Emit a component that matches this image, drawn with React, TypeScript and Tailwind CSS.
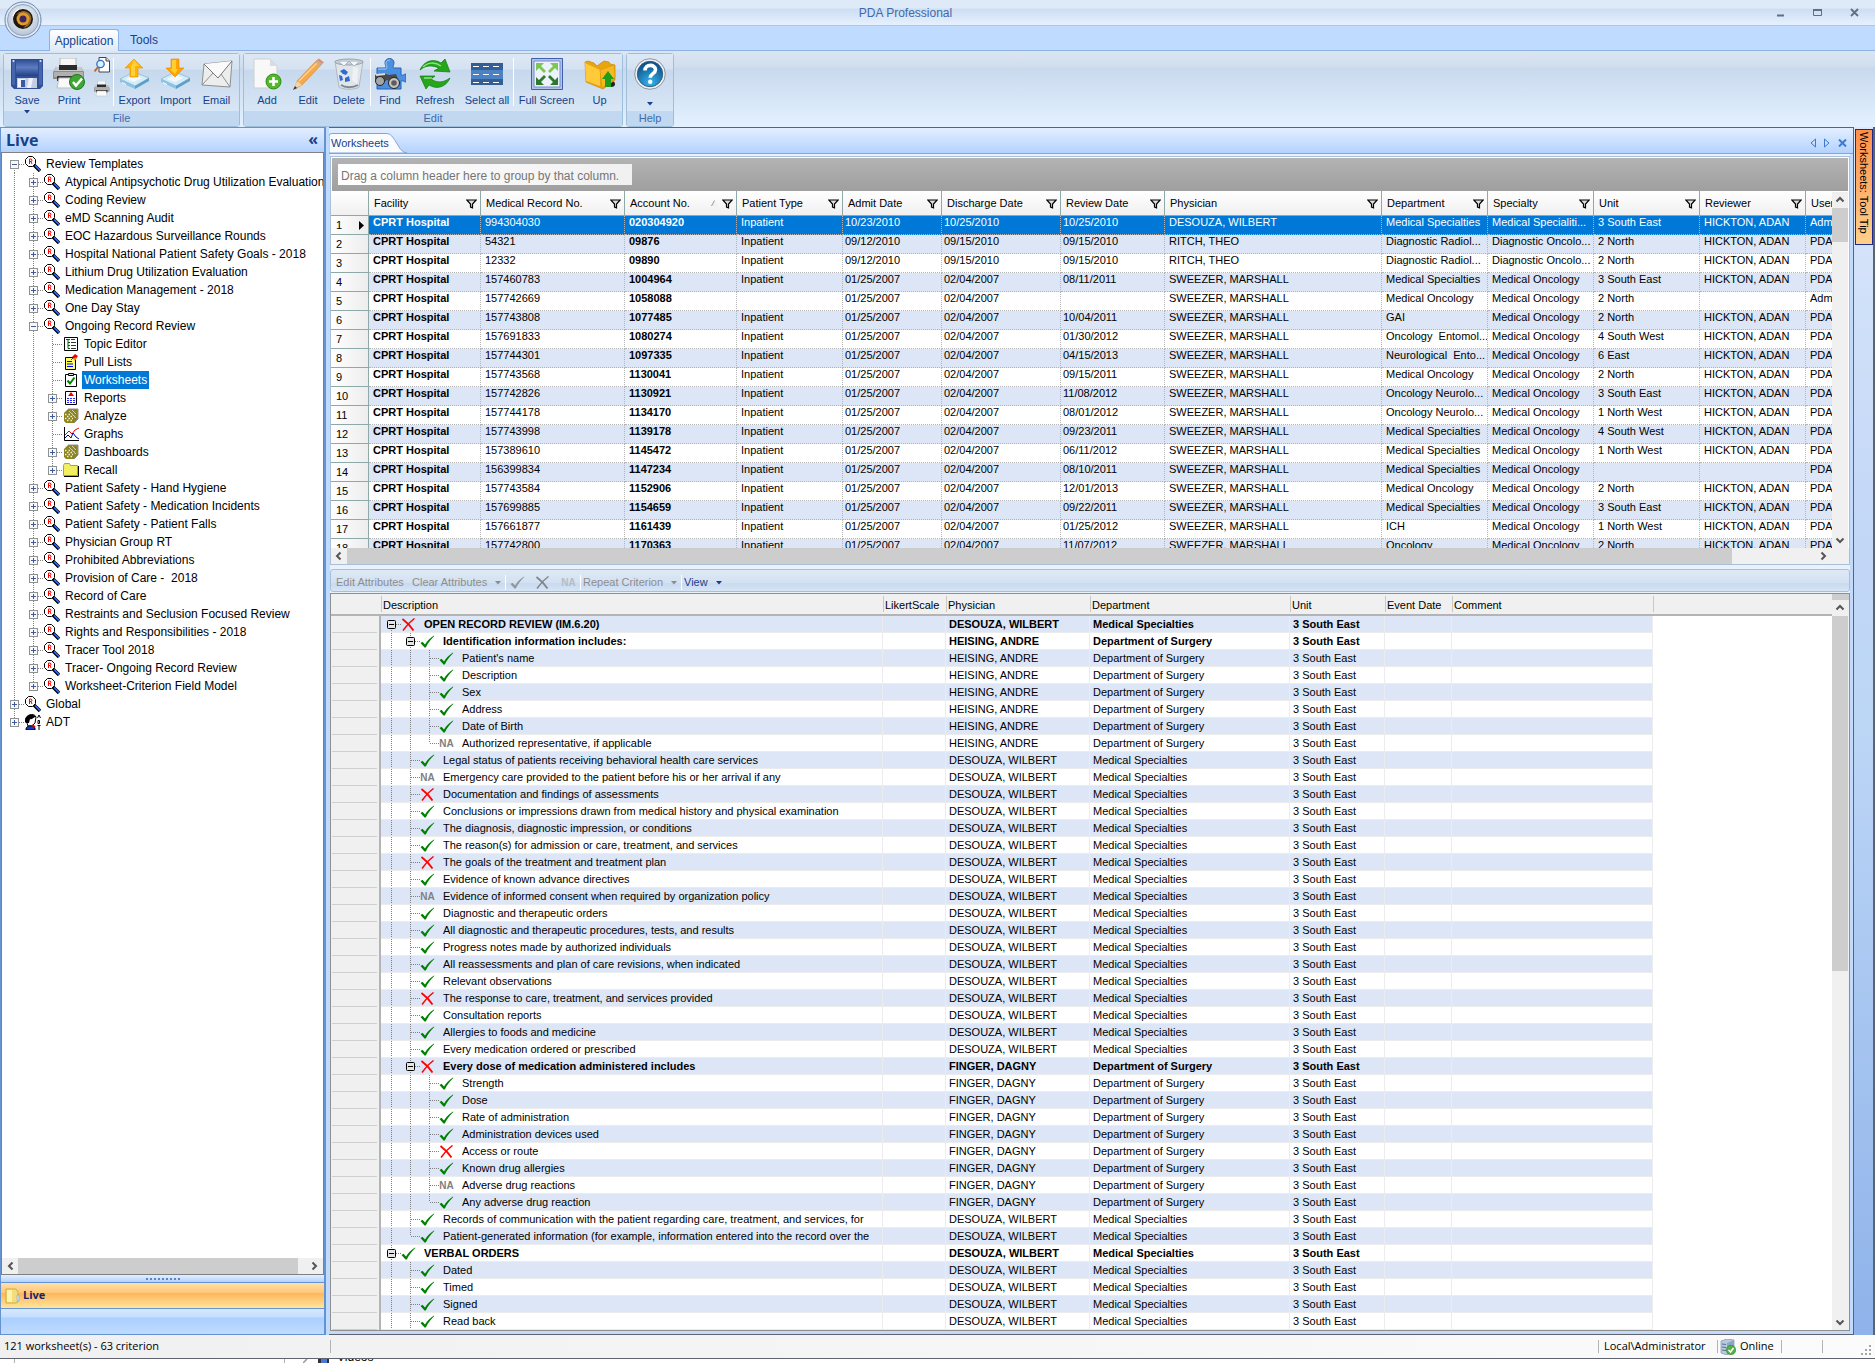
import React from "react";

type P = { children?: React.ReactNode };

/* ---------- ribbon icons ---------- */

const Svg32 = ({ children }: P) => (
  <svg width="32" height="32" viewBox="0 0 32 32" aria-hidden="true">
    {children}
  </svg>
);

const SaveIcon = () => (
  <Svg32>
    <defs>
      <linearGradient id="sv" x1="0" y1="0" x2="0" y2="1">
        <stop offset="0" stopColor="#2c4a8c" />
        <stop offset=".5" stopColor="#5b7cc4" />
        <stop offset="1" stopColor="#24407f" />
      </linearGradient>
    </defs>
    <path d="M0 1h32v27l-3 3H3l-3-3z" fill="#2f4f97" />
    <path d="M5 1h22v17H5z" fill="url(#sv)" />
    <path d="M1 2h3v25H1zM28 2h3v25h-3z" fill="#4565ad" />
    <path d="M6 20h20v10H6z" fill="#c3cde2" />
    <path d="M7 21h7v8H7z" fill="#f1f4fa" />
    <path d="M10 22h4v7h-4z" fill="#3a5a9f" />
    <path d="M18 20h4l-2 10h-4z" fill="#eef2fa" />
    <circle cx="2.500" cy="3" r="1" fill="#dfe6f5" />
    <circle cx="29.500" cy="3" r="1" fill="#dfe6f5" />
  </Svg32>
);

const PrinterBody = () => (
  <g>
    <path d="M7 0h16v12H7z" fill="#f7f7f7" stroke="#b5b5b5" />
    <path d="M3 9h25l3 5v7H0v-7z" fill="#8c8c8c" />
    <path d="M3 9h25l2 4H1z" fill="#c8c8c8" />
    <path d="M6 7h18v5H6z" fill="#2b2b2b" />
    <path d="M1 14h29v5H1z" fill="#b0b0b0" />
    <path d="M4 18h23v5H4z" fill="#3a3a3a" />
    <path d="M6 20h18l2 10H4z" fill="#fafafa" stroke="#bdbdbd" />
  </g>
);

const PrintIcon = () => (
  <Svg32>
    <PrinterBody />
    <circle cx="24" cy="24" r="7.500" fill="#3fa535" stroke="#1f7a1a" />
    <path d="M20 24l3 3.500 6-7" fill="none" stroke="#fff" strokeWidth="2.500" />
  </Svg32>
);

const SmallPrinter = () => (
  <svg width="16" height="16" viewBox="0 0 32 32" aria-hidden="true">
    <PrinterBody />
  </svg>
);

const PreviewIcon = () => (
  <svg width="16" height="16" viewBox="0 0 16 16" aria-hidden="true">
    <path d="M5 .5h7l3.500 3.500v11H5z" fill="#fff" stroke="#444" />
    <path d="M12 .5V4h3.500" fill="#ddd" stroke="#444" />
    <circle cx="6.500" cy="7" r="3.700" fill="#d9f0ff" stroke="#2f6fc4" strokeWidth="1.300" />
    <path d="M4 10l-3.500 4.500" stroke="#c06a2a" strokeWidth="2" />
  </svg>
);

const Drive = () => (
  <g>
    <path d="M1 21l14-7 15 6-14 8z" fill="#d3ecf8" stroke="#7fb4d4" strokeWidth=".7" />
    <path d="M1 21v3l15 7v-3.500z" fill="#8cc3e2" />
    <path d="M16 28v3l14-8v-3z" fill="#5b9fca" />
    <path d="M7 21l8-4 8 3-8 4z" fill="#fff" opacity=".7" />
    <path d="M3 24.500l4 2" stroke="#fff" />
  </g>
);

const ExportIcon = () => (
  <Svg32>
    <Drive />
    <path d="M15 1l9 9h-5v9h-8v-9H6z" fill="#ffb400" stroke="#f08c00" strokeWidth=".6" />
    <path d="M15 2l5 6h-4v10h-4V9z" fill="#ffd23a" />
  </Svg32>
);

const ImportIcon = () => (
  <Svg32>
    <Drive />
    <path d="M11 1h8v9h5l-9 9-9-9h5z" fill="#ffa400" stroke="#ef8300" strokeWidth=".6" />
    <path d="M12 2h4v9h2l-3 5-5-5h2z" fill="#ffcf2e" />
  </Svg32>
);

const EmailIcon = () => (
  <Svg32>
    <path d="M3 6l28-3-2 26L1 27z" fill="#eceded" stroke="#8f8f8f" />
    <path d="M3 6l14 14L31 3" fill="#fafafa" stroke="#777" />
    <path d="M1 27l11-12M29 29L20 16" fill="none" stroke="#8f8f8f" />
  </Svg32>
);

const AddIcon = () => (
  <Svg32>
    <path d="M3 1h16l7 7v22H3z" fill="#f8f8f8" stroke="#cfcfcf" />
    <path d="M19 1v7h7z" fill="#dcdcdc" />
    <circle cx="22.500" cy="23.500" r="7.500" fill="#55b82c" stroke="#2f8a12" />
    <path d="M22.500 19v9M18 23.500h9" stroke="#fff" strokeWidth="2.600" />
  </Svg32>
);

const EditIcon = () => (
  <Svg32>
    <path d="M5 23L25 2l5 4L10 27l-7 4z" fill="#f6a94a" stroke="#d98220" strokeWidth=".6" />
    <path d="M7 23L26 4" stroke="#ffd28f" strokeWidth="1.500" />
    <path d="M5 23l-3 8 8-4z" fill="#f1d3a5" />
    <path d="M3 28l-2 4 4-2z" fill="#333" />
    <path d="M25 2l2-1.500 5 4L30 6z" fill="#d58f7c" />
    <path d="M23 4l2-2 5 4-2 2z" fill="#c9b08a" />
  </Svg32>
);

const DeleteIcon = () => (
  <Svg32>
    <path d="M2 3h28l-4 26c-4 3-16 3-20 0z" fill="#dfe5ea" stroke="#a3adb5" strokeWidth=".8" />
    <ellipse cx="16" cy="4" rx="14" ry="3" fill="#c6d0d8" stroke="#98a4ae" />
    <path d="M6 4l5 4 5-5 5 5 5-4" fill="#f5f8fa" stroke="#8898a4" strokeWidth=".6" />
    <path d="M20 9l5 1-1 16-5-4z" fill="#eef2f5" />
    <path d="M7 13l4-2 4 3-2 3-3-1zM6 17l3 1 1 4-3 1zM12 20l4-2 1 5-5 1z" fill="#2f6ad0" />
    <path d="M8 27c4 3 12 3 17 0" stroke="#7d8890" fill="none" strokeWidth="2" />
  </Svg32>
);

const FindIcon = () => (
  <Svg32>
    <path
      d="M3 10h8c2-1 0-3 0-5 0-6 9-6 9 0 0 2-2 4 0 5h7v7c2 1 3-1 5-1v8c-2 0-3-2-5-1v8H3v-8z"
      fill="#4b8fe0"
      stroke="#2563b5"
    />
    <path d="M4 11h8c2-2 0-4 0-6s2-3 4-3" fill="none" stroke="#a5cdf7" />
    <path d="M1 17l8-2 6 2 7-1 2 5-5 4-6-3-5 3-7-3z" fill="#4a4a4a" />
    <circle cx="6" cy="23" r="4.500" fill="#a6a6a6" stroke="#222" />
    <circle cx="20" cy="25" r="5.500" fill="#c4c4c4" stroke="#222" />
    <circle cx="20" cy="25" r="2.800" fill="#5d5d5d" />
    <path d="M2 17l9-1" stroke="#ddd" strokeWidth="2" />
  </Svg32>
);

const RefreshIcon = () => (
  <Svg32>
    <path d="M1 12C5 3 14 0 22 5l4-4 5 13-16-1 5-3C13 7 7 7 1 12z" fill="#25a71c" stroke="#0f7a0b" strokeWidth=".7" />
    <path d="M31 20c-4 9-13 12-21 7l-3 4L1 18l15 0-4 3c6 4 12 4 19-1z" fill="#25a71c" stroke="#0f7a0b" strokeWidth=".7" />
    <path d="M4 9c5-5 12-5 18-1" fill="none" stroke="#8fe07f" strokeWidth="1.500" />
    <path d="M5 20h8" fill="none" stroke="#8fe07f" strokeWidth="1.500" />
  </Svg32>
);

const SelectAllIcon = () => (
  <Svg32>
    <path d="M0 5h32v22H0z" fill="#355f94" />
    <path d="M0 12h32v9H0z" fill="#4b82c3" />
    <path d="M2 8.500h28M2 16.500h28M2 24.500h28" stroke="#fff" strokeDasharray="6 4" />
  </Svg32>
);

const FullScreenIcon = () => (
  <Svg32>
    <path d="M.5.5h31v31H.5z" fill="#b3c3e6" stroke="#3e5fae" />
    <path d="M3 3h26v26H3z" fill="#eef3fb" stroke="#6f8ccb" />
    <path d="M5 5h8l-3 3 5 5-2 2-5-5-3 3zM27 5v8l-3-3-5 5-2-2 5-5-3-3z" fill="#7cc653" />
    <path d="M5 27v-8l3 3 5-5 2 2-5 5 3 3zM27 27h-8l3-3-5-5 2-2 5 5 3-3z" fill="#2f7a2a" />
  </Svg32>
);

const UpIcon = () => (
  <Svg32>
    <ellipse cx="27" cy="26" rx="4" ry="3" fill="#222" />
    <path d="M1 4l3-1 6 2 3 3 4-3 3-2 5 1 1 2 5 1v15L19 31 2 24z" fill="#e9a40f" stroke="#c98a06" strokeWidth=".7" />
    <path d="M1 5l15 7v16L2 23z" fill="#ffc93a" />
    <path d="M16 12l14-5 1 12-13 11z" fill="#f7b922" stroke="#d5960c" strokeWidth=".6" />
    <path d="M24 13l6 8h-3v8h-6v-8h-3z" fill="#1f9d1b" />
  </Svg32>
);

const HelpIcon = () => (
  <Svg32>
    <defs>
      <radialGradient id="hp" cx=".5" cy=".85" r=".8">
        <stop offset="0" stopColor="#35b5ee" />
        <stop offset="1" stopColor="#0b4f86" />
      </radialGradient>
    </defs>
    <circle cx="16" cy="16" r="15.300" fill="#eef1f4" stroke="#8b96a3" />
    <circle cx="16" cy="16" r="12.700" fill="url(#hp)" stroke="#3b5f80" />
    <path d="M11 12.500c0-7 10.500-6.500 10.500-.8 0 4-5.300 3.800-5.300 8" fill="none" stroke="#fff" strokeWidth="3.600" />
    <circle cx="16.200" cy="23.800" r="2.200" fill="#fff" />
  </Svg32>
);

const AppOrb = () => (
  <svg width="38" height="38" viewBox="0 0 38 38" aria-hidden="true">
    <defs>
      <radialGradient id="orb" cx=".5" cy=".4" r=".6">
        <stop offset="0" stopColor="#ffffff" />
        <stop offset="1" stopColor="#b4c3d8" />
      </radialGradient>
    </defs>
    <circle cx="19" cy="19" r="18" fill="#dfe9f6" stroke="#6d86a8" />
    <circle cx="19" cy="19" r="15.500" fill="url(#orb)" stroke="#8ea3bf" />
    <circle cx="19" cy="18" r="10" fill="#20180f" />
    <path d="M12 14a9 9 0 0 1 13-2 8 8 0 0 1 2 8 9 9 0 0 1-8 7c4-3 5-7 3-11s-6-4-10-2z" fill="#8d6a35" />
    <circle cx="19" cy="18" r="6.500" fill="#e39a26" />
    <circle cx="19" cy="18" r="3.500" fill="#3a2660" />
    <path d="M9 15a10 10 0 0 1 6-7" stroke="#fff" fill="none" />
  </svg>
);

/* ---------- tree icons ---------- */

const Svg16 = ({ children }: P) => (
  <svg width="16" height="16" viewBox="0 0 16 16" aria-hidden="true" className="shrink-0">
    {children}
  </svg>
);

const Lens = () => (
  <Svg16>
    <path d="M9 9l6 6" stroke="#000" strokeWidth="3.400" />
    <path d="M10 9.500l5 5" stroke="#2f6fff" strokeWidth="1.600" />
    <path d="M3.500.5h4l3 3v4l-3 3h-4l-3-3v-4z" fill="#fff" stroke="#000" />
    <path d="M4.500 8V3H6l1 .8v1L6 5.500H5M6 5.500L7 8" fill="none" stroke="#f00" />
  </Svg16>
);

const TopicIcon = () => (
  <Svg16>
    <path d="M1.500 1.500h13v13h-13z" fill="#fff" stroke="#000" />
    <path d="M3 3.500h4M5 3v9.500M5 6.500h2M5 9.500h2M5 12.500h2" stroke="#060" fill="none" />
    <path d="M8 3.500h4M8 6.500h5M8 9.500h5M8 12.500h5" stroke="#333" />
  </Svg16>
);

const PullIcon = () => (
  <Svg16>
    <path d="M2.500 3.500h10v12h-10z" fill="#ff6" stroke="#000" />
    <path d="M4 7.500h5M4 10h6M4 12.500h6" stroke="#00f" />
    <path d="M8 6l4-4" stroke="#444" />
    <path d="M9 3l3-3 3 2-3 4z" fill="#e00" />
    <path d="M11 6l2-2" stroke="#f80" strokeWidth="2" />
  </Svg16>
);

const ClipIcon = () => (
  <Svg16>
    <path d="M2.500 2.500h11v12h-11z" fill="#fff" stroke="#000" />
    <path d="M5.500 1.500h5v2h-5z" fill="#ddd" stroke="#000" />
    <path d="M4.500 8.500l2.500 3 4.500-6" fill="none" stroke="#008000" strokeWidth="2" />
  </Svg16>
);

const ReportIcon = () => (
  <Svg16>
    <path d="M2.500 1.500h11v13h-11z" fill="#fff" stroke="#000" />
    <path d="M8 2l3 4H5z" fill="#e00" />
    <path d="M4 8.500h8M4 10.500h8M4 12.500h8" stroke="#22f" strokeDasharray="2 1" />
  </Svg16>
);

const AnalyzeIcon = () => (
  <Svg16>
    <path d="M1 5l4-4h10v10l-4 4H3l-2-2z" fill="#8a8520" />
    <path d="M5 1h10v10l-4 4" fill="none" stroke="#8f8f8f" />
    <path d="M2 6.500h8M4 8.500h8M2 10.500h8M4 12.500h7" stroke="#f4f0c0" strokeWidth="1.500" strokeDasharray="1.500 2" />
    <path d="M6 3l7 7M9 2l4 4" stroke="#d2d0b0" />
  </Svg16>
);

const GraphIcon = () => (
  <Svg16>
    <path d="M1.500 1v13.500H16" fill="none" stroke="#000" />
    <path d="M2 9l4-4 3 3 3-4 4-2" fill="none" stroke="#e00" />
    <path d="M2 12l3-3 3 3 2-5 3 4 3 2" fill="none" stroke="#00a" />
  </Svg16>
);

const FolderIcon = () => (
  <Svg16>
    <path d="M.5 3.500l1-2h5l1 2h7v10H.5z" fill="#f3ee60" stroke="#999" />
    <path d="M15.500 4v10.500H1" fill="none" stroke="#000" />
  </Svg16>
);

const AdtIcon = () => (
  <Svg16>
    <path d="M1 6c-1-5 8-8 10-3l-1 6-3 3H3z" fill="#fff" stroke="#000" />
    <path d="M0 8c-1-8 9-9 11-5-3 0-3 3-6 2l-1 4H1z" fill="#000" />
    <path d="M1 15c0-4 8-4 9-1v2H1z" fill="#1238c8" stroke="#000" />
    <path d="M7 11l3 2" stroke="#e00" strokeWidth="2" />
    <path d="M12.500 4l1.500-3 1.500 3M13 6.500h1.500v3H13zM12.500 11.500h3M14 12v4" stroke="#000" fill="none" />
  </Svg16>
);

/* ---------- small glyphs ---------- */

const CheckMark = ({ color = "#008000" }: { color?: string }) => (
  <svg width="15" height="13" viewBox="0 0 15 13" aria-hidden="true" className="shrink-0">
    <path d="M.5 8l2-1.200L5 9.500C7.500 5.500 10 3 14 .5l.3.500C10.500 4.500 8 8 5.800 12.500H4.500z" fill={color} />
  </svg>
);

const CrossMark = ({ color = "#ff0000" }: { color?: string }) => (
  <svg width="15" height="13" viewBox="0 0 15 13" aria-hidden="true" className="shrink-0">
    <path d="M1.500 1c4 3 8 7 11 11.500" fill="none" stroke={color} strokeWidth="1.800" />
    <path d="M13.500.5C8.500 4 5 8 2 12.500" fill="none" stroke={color} strokeWidth="1.400" />
  </svg>
);

const NaMark = ({ dim }: { dim?: boolean }) => (
  <span
    className={
      "w-[15px] shrink-0 text-center text-[10px] leading-[13px] font-bold " + (dim ? "text-[#b5bcc4]" : "text-[#808080]")
    }
  >
    NA
  </span>
);

const Funnel = () => (
  <svg width="11" height="10" viewBox="0 0 11 10" aria-hidden="true" className="shrink-0">
    <path d="M.8 1h9.400L6.500 5v3.800L4.500 8V5z" fill="#ddd" stroke="#000" strokeWidth="1.200" />
  </svg>
);

const Caret = ({ className }: { className: string }) => (
  <svg width="6" height="4" viewBox="0 0 6 4" aria-hidden="true" className={className}>
    <path d="M0 0h6L3 3.500z" fill="currentColor" />
  </svg>
);

const Arrow = ({ dir }: { dir: "up" | "down" | "left" | "right" }) => {
  const d = {
    up: "M1.500 6.500L5 3l3.500 3.500",
    down: "M1.500 3.500L5 7l3.500-3.500",
    left: "M6.500 1.500L3 5l3.500 3.500",
    right: "M3.500 1.500L7 5 3.500 8.500",
  }[dir];
  return (
    <button aria-label={"Scroll " + dir} className="flex size-4 shrink-0 items-center justify-center bg-[#f0f0f0]">
      <svg width="10" height="10" viewBox="0 0 10 10">
        <path d={d} fill="none" stroke="#555" strokeWidth="2" />
      </svg>
    </button>
  );
};

/* ---------- ribbon ---------- */

function RibbonButton({ label, icon, w, caret }: { label: string; icon: React.ReactNode; w: string; caret?: boolean }) {
  return (
    <button className={"relative flex flex-col items-center pt-1 text-[11px] leading-3 text-[#15428b] " + w}>
      {icon}
      <span className="mt-1 min-h-3 whitespace-nowrap">{label}</span>
      {caret && <Caret className={label ? "mt-1" : "-mt-1"} />}
    </button>
  );
}

const Sep = () => <span className="mt-1 h-12 w-px shrink-0 border-r border-white bg-[#b9cbe2]" />;

function Group({ title, children }: { title: string; children: React.ReactNode }) {
  return (
    <section className="flex flex-col rounded-[3px] border border-[#9ebfdb] shadow-[inset_1px_1px_0_#eef5fc]">
      <div className="flex h-[57px] items-start bg-[linear-gradient(#dde8f5_0px,#d5e2f1_15px,#c7d8ed_16px,#d8e7f6_58px)] px-[2px]">
        {children}
      </div>
      <h2 className="h-[15px] bg-[#c1d8f0] text-center text-[11px] leading-[15px] text-[#3e6aaa]">{title}</h2>
    </section>
  );
}

function Ribbon() {
  return (
    <div className="flex h-[76px] shrink-0 items-start gap-[3px] bg-[linear-gradient(#dbe6f4_0px,#cfddee_16px,#c9d9ed_17px,#e3f1ff_76px)] px-[3px] pt-[2px]">
      <Group title="File">
        <RibbonButton label="Save" icon={<SaveIcon />} w="w-[42px]" caret />
        <RibbonButton label="Print" icon={<PrintIcon />} w="w-[42px]" />
        <div className="flex w-[23px] flex-col items-center gap-2 pt-[3px]">
          <button aria-label="Print preview">
            <PreviewIcon />
          </button>
          <button aria-label="Quick print">
            <SmallPrinter />
          </button>
        </div>
        <Sep />
        <RibbonButton label="Export" icon={<ExportIcon />} w="w-[41px]" />
        <RibbonButton label="Import" icon={<ImportIcon />} w="w-[41px]" />
        <RibbonButton label="Email" icon={<EmailIcon />} w="w-[41px]" />
      </Group>
      <Group title="Edit">
        <RibbonButton label="Add" icon={<AddIcon />} w="w-[42px]" />
        <RibbonButton label="Edit" icon={<EditIcon />} w="w-[40px]" />
        <RibbonButton label="Delete" icon={<DeleteIcon />} w="w-[42px]" />
        <Sep />
        <RibbonButton label="Find" icon={<FindIcon />} w="w-[38px]" />
        <RibbonButton label="Refresh" icon={<RefreshIcon />} w="w-[52px]" />
        <RibbonButton label="Select all" icon={<SelectAllIcon />} w="w-[52px]" />
        <Sep />
        <RibbonButton label="Full Screen" icon={<FullScreenIcon />} w="w-[65px]" />
        <RibbonButton label="Up" icon={<UpIcon />} w="w-[41px]" />
      </Group>
      <Group title="Help">
        <RibbonButton label="" icon={<HelpIcon />} w="w-[42px]" caret />
      </Group>
    </div>
  );
}

/* ---------- navigation tree ---------- */

type Node = { lv: number; t: string; icon?: React.ReactNode; box?: "+" | "-"; first?: boolean; last?: boolean; sel?: boolean };

const tpl = (t: string, extra: Partial<Node> = {}): Node => ({ lv: 1, t, box: "+", ...extra });

const NODES: Node[] = [
  { lv: 0, t: "Review Templates", box: "-", first: true },
  tpl("Atypical Antipsychotic Drug Utilization Evaluation"),
  tpl("Coding Review"),
  tpl("eMD Scanning Audit"),
  tpl("EOC Hazardous Surveillance Rounds"),
  tpl("Hospital National Patient Safety Goals - 2018"),
  tpl("Lithium Drug Utilization Evaluation"),
  tpl("Medication Management - 2018"),
  tpl("One Day Stay"),
  tpl("Ongoing Record Review", { box: "-" }),
  { lv: 2, t: "Topic Editor", icon: <TopicIcon /> },
  { lv: 2, t: "Pull Lists", icon: <PullIcon /> },
  { lv: 2, t: "Worksheets", icon: <ClipIcon />, sel: true },
  { lv: 2, t: "Reports", icon: <ReportIcon />, box: "+" },
  { lv: 2, t: "Analyze", icon: <AnalyzeIcon />, box: "+" },
  { lv: 2, t: "Graphs", icon: <GraphIcon /> },
  { lv: 2, t: "Dashboards", icon: <AnalyzeIcon />, box: "+" },
  { lv: 2, t: "Recall", icon: <FolderIcon />, box: "+", last: true },
  tpl("Patient Safety - Hand Hygiene"),
  tpl("Patient Safety - Medication Incidents"),
  tpl("Patient Safety - Patient Falls"),
  tpl("Physician Group RT"),
  tpl("Prohibited Abbreviations"),
  tpl("Provision of Care -  2018"),
  tpl("Record of Care"),
  tpl("Restraints and Seclusion Focused Review"),
  tpl("Rights and Responsibilities - 2018"),
  tpl("Tracer Tool 2018"),
  tpl("Tracer- Ongoing Record Review"),
  tpl("Worksheet-Criterion Field Model", { last: true }),
  { lv: 0, t: "Global", box: "+" },
  { lv: 0, t: "ADT", box: "+", last: true, icon: <AdtIcon /> },
];

/* Dotted guide of one tree level, with the expander box where there is one. */
function Guide({ h, own, box, first, last, dark }: { h: number; own: boolean; box?: "+" | "-"; first?: boolean; last?: boolean; dark?: boolean }) {
  const m = Math.floor(h / 2);
  return (
    <svg width="19" height={h} viewBox={`0 0 19 ${h}`} className="shrink-0" aria-hidden="true">
      <path d={`M9.500 ${first ? m : 0}V${own && last ? m : h}`} stroke="#808080" strokeDasharray="1 1" />
      {own && <path d={`M10 ${m + 0.5}H19`} stroke="#808080" strokeDasharray="1 1" />}
      {own && box && (
        <g>
          <rect x="5.500" y={m - 3.5} width="8" height="8" rx={dark ? 1 : 0} fill={dark ? "#e4e4e4" : "#f8f8f8"} stroke={dark ? "#000" : "#919191"} />
          <path d={`M7 ${m + 0.5}h5` + (box === "+" ? `M9.500 ${m - 2}v5` : "")} stroke={dark ? "#000" : "#3b5aa0"} />
        </g>
      )}
    </svg>
  );
}

function NavTree() {
  return (
    <div role="tree" className="flex-1 overflow-hidden pt-[2px] pl-[3px] text-[12px] leading-[18px] text-black">
      {NODES.map((n) => (
        <div key={n.t} role="treeitem" aria-selected={!!n.sel} className="flex h-[18px] items-center whitespace-nowrap">
          {Array.from({ length: n.lv + 1 }, (_, i) => (
            <Guide key={i} h={18} own={i === n.lv} box={n.box} first={n.first} last={n.last} />
          ))}
          <span className="ml-px">{n.icon ?? <Lens />}</span>
          <button className={"ml-[3px] px-[2px] whitespace-pre " + (n.sel ? "bg-[#0078d7] text-white" : "")}>{n.t}</button>
        </div>
      ))}
    </div>
  );
}

function Sidebar() {
  return (
    <aside className="flex w-[326px] shrink-0 flex-col border border-r-2 border-[#6593cf]">
      <header className="flex h-6 shrink-0 items-center justify-between bg-[linear-gradient(#e3efff,#b3d2ff)] pr-[6px] pl-[5px] font-['Open_Sans','Noto_Sans',sans-serif] text-[#15428b]">
        <h1 className="text-[16px] leading-6 font-bold">Live</h1>
        <button aria-label="Collapse" className="pb-[3px] text-[16px] leading-5 font-bold">
          «
        </button>
      </header>
      <div className="flex min-h-0 flex-1 flex-col border border-[#808080] bg-white">
        <NavTree />
        <div className="flex h-4 shrink-0 justify-between bg-[#f0f0f0] px-px">
          <Arrow dir="left" />
          <div className="mr-1 -ml-px flex-1 bg-[#cdcdcd]" />
          <span className="w-1" />
          <Arrow dir="right" />
        </div>
      </div>
      <div className="flex h-[7px] shrink-0 items-center justify-center gap-[2px] bg-[linear-gradient(#e3efff,#b3d2ff)]">
        {Array.from({ length: 9 }, (_, i) => (
          <span key={i} className="size-[2px] bg-[#5a86c5]" />
        ))}
      </div>
      <button className="flex h-[27px] shrink-0 items-center gap-[3px] border-y border-[#6593cf] bg-[linear-gradient(#ffe0a8_0%,#ffc77a_38%,#ffb458_40%,#ffe69d_100%)] pl-1 font-['Open_Sans','Noto_Sans',sans-serif] text-[11px] font-bold text-[#15256b]">
        <svg width="15" height="16" viewBox="0 0 15 16" aria-hidden="true">
          <path d="M1 1h10l2 3v10l-2 1H1z" fill="#f2df7c" stroke="#cfae3f" />
          <path d="M2 2h5v12H2z" fill="#fbf1b0" />
          <path d="M12 7h2v6h-2z" fill="#cfe3f7" stroke="#7a9bc0" strokeWidth=".5" />
        </svg>
        Live
      </button>
      <div className="h-[25px] shrink-0 bg-[linear-gradient(#d7e8ff_0px,#c5deff_8px,#abcfff_9px,#c0dbff_25px)]" />
    </aside>
  );
}

/* ---------- worksheets grid ---------- */

const COLS: { t: string; w: string; pad: string; sort?: boolean; bold?: boolean }[] = [
  { t: "Facility", w: "w-[112px]", pad: "pl-1", bold: true },
  { t: "Medical Record No.", w: "w-[144px]", pad: "pl-1" },
  { t: "Account No.", w: "w-[112px]", pad: "pl-1", sort: true, bold: true },
  { t: "Patient Type", w: "w-[106px]", pad: "pl-1" },
  { t: "Admit Date", w: "w-[99px]", pad: "pl-[2px]" },
  { t: "Discharge Date", w: "w-[119px]", pad: "pl-[2px]" },
  { t: "Review Date", w: "w-[104px]", pad: "pl-[2px]" },
  { t: "Physician", w: "w-[217px]", pad: "pl-1" },
  { t: "Department", w: "w-[106px]", pad: "pl-1" },
  { t: "Specialty", w: "w-[106px]", pad: "pl-1" },
  { t: "Unit", w: "w-[106px]", pad: "pl-1" },
  { t: "Reviewer", w: "w-[106px]", pad: "pl-1" },
  { t: "User", w: "w-[106px]", pad: "pl-1" },
];

const CP = "CPRT Hospital";
const IN = "Inpatient";
const SM = "SWEEZER, MARSHALL";
const HA = "HICKTON, ADAN";
const MO = "Medical Oncology";
const MS = "Medical Specialties";
const A = "01/25/2007";
const D = "02/04/2007";

const ROWS: string[][] = [
  [CP, "994304030", "020304920", IN, "10/23/2010", "10/25/2010", "10/25/2010", "DESOUZA, WILBERT", MS, "Medical Specialiti...", "3 South East", HA, "Admin"],
  [CP, "54321", "09876", IN, "09/12/2010", "09/15/2010", "09/15/2010", "RITCH, THEO", "Diagnostic Radiol...", "Diagnostic Oncolo...", "2 North", HA, "PDA"],
  [CP, "12332", "09890", IN, "09/12/2010", "09/15/2010", "09/15/2010", "RITCH, THEO", "Diagnostic Radiol...", "Diagnostic Oncolo...", "2 North", HA, "PDA"],
  [CP, "157460783", "1004964", IN, A, D, "08/11/2011", SM, MS, MO, "3 South East", HA, "PDA"],
  [CP, "157742669", "1058088", "", A, D, "", SM, MO, MO, "2 North", "", "Admin"],
  [CP, "157743808", "1077485", IN, A, D, "10/04/2011", SM, "GAI", MO, "2 North", HA, "PDA"],
  [CP, "157691833", "1080274", IN, A, D, "01/30/2012", SM, "Oncology  Entomol...", MO, "4 South West", HA, "PDA"],
  [CP, "157744301", "1097335", IN, A, D, "04/15/2013", SM, "Neurological  Ento...", MO, "6 East", HA, "PDA"],
  [CP, "157743568", "1130041", IN, A, D, "09/15/2011", SM, MO, MO, "2 North", HA, "PDA"],
  [CP, "157742826", "1130921", IN, A, D, "11/08/2012", SM, "Oncology Neurolo...", MO, "3 South East", HA, "PDA"],
  [CP, "157744178", "1134170", IN, A, D, "08/01/2012", SM, "Oncology Neurolo...", MO, "1 North West", HA, "PDA"],
  [CP, "157743998", "1139178", IN, A, D, "09/23/2011", SM, MS, MO, "4 South West", HA, "PDA"],
  [CP, "157389610", "1145472", IN, A, D, "06/11/2012", SM, MS, MO, "1 North West", HA, "PDA"],
  [CP, "156399834", "1147234", IN, A, D, "08/10/2011", SM, MS, MO, "", "", "PDA"],
  [CP, "157743584", "1152906", IN, A, D, "12/01/2013", SM, MO, MO, "2 North", HA, "PDA"],
  [CP, "157699885", "1154659", IN, A, D, "09/22/2011", SM, MS, MO, "3 South East", HA, "PDA"],
  [CP, "157661877", "1161439", IN, A, D, "01/25/2012", SM, "ICH", MO, "1 North West", HA, "PDA"],
  [CP, "157742800", "1170363", IN, A, D, "11/07/2012", SM, "Oncology", MO, "2 North", HA, "PDA"],
];

function Grid() {
  return (
    <section className="flex h-[409px] shrink-0 flex-col border border-[#a9c0dc] bg-white">
      <div className="mx-px mt-px flex h-[33px] shrink-0 items-center bg-[linear-gradient(#b3b3b3,#9f9f9f)] pl-[6px]">
        <p className="bg-[linear-gradient(90deg,#ffffff,#f0f0f0)] pt-[3px] pr-[13px] pl-[3px] text-[12px] leading-[18px] text-[#757575]">
          Drag a column header here to group by that column.
        </p>
      </div>
      <div className="flex min-h-0 flex-1">
        <div className="min-w-0 flex-1 overflow-hidden">
          <table className="w-[1581px] table-fixed border-separate border-spacing-0 text-left text-[11px] text-black">
            <thead>
              <tr className="h-[25px]">
                <th aria-label="Row" className="w-[38px] border-r border-b border-[#8fa9a9] bg-[linear-gradient(#ffffff,#f0f0f0)]" />
                {COLS.map((c) => (
                  <th
                    key={c.t}
                    className={"border-r border-b border-[#8fa9a9] bg-[linear-gradient(#ffffff,#f0f0f0)] p-0 font-normal " + c.w}
                  >
                    <div className="flex items-center pt-px pr-[3px] pl-[5px]">
                      <span className="whitespace-nowrap">{c.t}</span>
                      {c.sort && (
                        <svg width="8" height="7" viewBox="0 0 8 7" className="ml-auto" aria-hidden="true">
                          <path d="M0 6.500h7L3.500 0z" fill="#f2f2f2" />
                          <path d="M.5 6L3.500.5" stroke="#999" />
                        </svg>
                      )}
                      <button aria-label={"Filter " + c.t} className={c.sort ? "ml-[3px]" : "ml-auto"}>
                        <Funnel />
                      </button>
                    </div>
                  </th>
                ))}
              </tr>
            </thead>
            <tbody>
              {ROWS.map((r, i) => (
                <tr key={r[1]} className={"h-[19px] " + (i === 0 ? "bg-[#0078d7] text-white" : i % 2 ? "bg-[#dce6f7]" : "bg-white")}>
                  <th className="border-r border-b border-[#8fa9a9] bg-[linear-gradient(90deg,#ffffff,#ededed)] p-0 pl-[5px] font-normal text-black">
                    <div className="flex items-center justify-between pt-px pr-1">
                      <span className="leading-[17px]">{i + 1}</span>
                      {i === 0 && (
                        <svg width="5" height="9" viewBox="0 0 5 9" aria-hidden="true">
                          <path d="M0 0l5 4.500L0 9z" fill="#000" />
                        </svg>
                      )}
                    </div>
                  </th>
                  {r.map((v, j) => (
                    <td
                      key={j}
                      className={
                        "overflow-hidden border-r border-b border-dotted border-[#b4b4b4] p-0 align-top leading-3 whitespace-pre " +
                        COLS[j].pad +
                        (COLS[j].bold ? " font-bold" : "")
                      }
                    >
                      {v}
                    </td>
                  ))}
                </tr>
              ))}
            </tbody>
          </table>
        </div>
        <div className="mt-px mr-px flex w-4 shrink-0 flex-col bg-[#f0f0f0]">
          <Arrow dir="up" />
          <div className="h-[34px] bg-[#cdcdcd]" />
          <span className="flex-1" />
          <Arrow dir="down" />
        </div>
      </div>
      <div className="flex h-4 shrink-0 bg-[#f0f0f0] pr-[18px]">
        <Arrow dir="left" />
        <div className="mr-[83px] flex-1 bg-[#cdcdcd]" />
        <Arrow dir="right" />
      </div>
    </section>
  );
}

/* ---------- criterion list ---------- */

type Mark = "y" | "n" | "a";
type Crit = { lv: number; m: Mark; t: string; who: "D" | "H" | "F"; open?: boolean; last?: boolean };

const c = (lv: number, m: Mark, t: string, who: Crit["who"] = "D", x: Partial<Crit> = {}): Crit => ({ lv, m, t, who, ...x });

const CRIT: Crit[] = [
  c(0, "n", "OPEN RECORD REVIEW (IM.6.20)", "D", { open: true }),
  c(1, "y", "Identification information includes:", "H", { open: true }),
  c(2, "y", "Patient's name", "H"),
  c(2, "y", "Description", "H"),
  c(2, "y", "Sex", "H"),
  c(2, "y", "Address", "H"),
  c(2, "y", "Date of Birth", "H"),
  c(2, "a", "Authorized representative, if applicable", "H", { last: true }),
  c(1, "y", "Legal status of patients receiving behavioral health care services"),
  c(1, "a", "Emergency care provided to the patient before his or her arrival if any"),
  c(1, "n", "Documentation and findings of assessments"),
  c(1, "y", "Conclusions or impressions drawn from medical history and physical examination"),
  c(1, "y", "The diagnosis, diagnostic impression, or conditions"),
  c(1, "y", "The reason(s) for admission or care, treatment, and services"),
  c(1, "n", "The goals of the treatment and treatment plan"),
  c(1, "y", "Evidence of known advance directives"),
  c(1, "a", "Evidence of informed consent when required by organization policy"),
  c(1, "y", "Diagnostic and therapeutic orders"),
  c(1, "y", "All diagnostic and therapeutic procedures, tests, and results"),
  c(1, "y", "Progress notes made by authorized individuals"),
  c(1, "y", "All reassessments and plan of care revisions, when indicated"),
  c(1, "y", "Relevant observations"),
  c(1, "n", "The response to care, treatment, and services provided"),
  c(1, "y", "Consultation reports"),
  c(1, "y", "Allergies to foods and medicine"),
  c(1, "y", "Every medication ordered or prescribed"),
  c(1, "n", "Every dose of medication administered includes", "F", { open: true }),
  c(2, "y", "Strength", "F"),
  c(2, "y", "Dose", "F"),
  c(2, "y", "Rate of administration", "F"),
  c(2, "y", "Administration devices used", "F"),
  c(2, "n", "Access or route", "F"),
  c(2, "y", "Known drug allergies", "F"),
  c(2, "a", "Adverse drug reactions", "F"),
  c(2, "y", "Any adverse drug reaction", "F", { last: true }),
  c(1, "y", "Records of communication with the patient regarding care, treatment, and services, for"),
  c(1, "y", "Patient-generated information (for example, information entered into the record over the", "D", { last: true }),
  c(0, "y", "VERBAL ORDERS", "D", { open: true }),
  c(1, "y", "Dated"),
  c(1, "y", "Timed"),
  c(1, "y", "Signed"),
  c(1, "y", "Read back"),
];

const PEOPLE = { D: "DESOUZA, WILBERT", H: "HEISING, ANDRE", F: "FINGER, DAGNY" };

const CHEADS: [string, string][] = [
  ["Description", "w-[502px]"],
  ["LikertScale", "w-[63px]"],
  ["Physician", "w-[144px]"],
  ["Department", "w-[200px]"],
  ["Unit", "w-[95px]"],
  ["Event Date", "w-[67px]"],
  ["Comment", "w-[201px]"],
  ["", ""],
];

const CELL = "overflow-hidden border-r border-b border-[#ececec] p-0 whitespace-nowrap";

function Criteria() {
  return (
    <section className="flex min-h-0 flex-1 border border-[#8f8f8f] bg-white">
      <div className="min-w-0 flex-1 overflow-hidden">
        <table className="w-full table-fixed border-separate border-spacing-0 text-left text-[11px] leading-4 text-black">
          <thead>
            <tr className="h-[22px] bg-[#f0f0f0]">
              <th aria-label="Row" className="w-[50px] border-b-2 border-[#b4b4b4]" />
              {CHEADS.map(([t, w]) => (
                <th key={t} className={"border-b-2 border-[#b4b4b4] p-0 font-normal " + w}>
                  <div className="h-4 border-l border-[#c8c8c8] pl-px leading-[19px] whitespace-nowrap">{t}</div>
                </th>
              ))}
            </tr>
          </thead>
          <tbody>
            {CRIT.map((r, i) => {
              const dept = r.who === "D" ? MS : "Department of Surgery";
              return (
                <tr key={i} className={"h-[17px] " + (r.open ? "font-bold" : "")}>
                  <th className="border-r-2 border-[#b4b4b4] bg-[#f0f0f0] p-0 pr-[2px] pl-px">
                    <div className="h-[17px] border-b border-[#cfcfcf]" />
                  </th>
                  {[null, "", PEOPLE[r.who], dept, "3 South East", "", ""].map((v, j) => (
                    <td key={j} className={CELL + (j ? " pl-[3px]" : " pl-px") + (i % 2 ? "" : " bg-[#dce6f7]")}>
                      {j === 0 ? (
                        <div className="flex h-4 items-center">
                          {Array.from({ length: r.lv + 1 }, (_, k) => (
                            <Guide
                              key={k}
                              h={16}
                              own={k === r.lv}
                              box={r.open ? "-" : undefined}
                              first={i === 0}
                              last={r.last}
                              dark
                            />
                          ))}
                          {r.m === "y" ? <CheckMark /> : r.m === "n" ? <CrossMark /> : <NaMark />}
                          <span className="ml-2">{r.t}</span>
                        </div>
                      ) : (
                        v
                      )}
                    </td>
                  ))}
                  <td />
                </tr>
              );
            })}
          </tbody>
        </table>
      </div>
      <div className="flex w-[17px] shrink-0 flex-col bg-[#f0f0f0] pr-px">
        <div className="h-[6px] w-[17px] shrink-0 bg-[#cdcdcd]" />
        <Arrow dir="up" />
        <div className="h-[355px] bg-[#cdcdcd]" />
        <span className="flex-1" />
        <Arrow dir="down" />
      </div>
    </section>
  );
}

function CriteriaBar() {
  const sep = <span className="h-[15px] w-px shrink-0 border-r border-white bg-[#a9c3e2]" />;
  return (
    <div className="mt-[4px] mb-px flex h-[23px] shrink-0 items-center rounded-[3px] border border-[#a3c0dd] bg-[linear-gradient(#dfe9f5_0%,#d3e1f1_60%,#c8daf0_65%,#d7e6f6_100%)] pt-1 pl-[5px] text-[11px] text-[#8d8d8d]">
      <button disabled className="w-[76px] text-left">
        Edit Attributes
      </button>
      <button disabled className="flex w-[93px] items-center justify-between pr-1">
        Clear Attributes <Caret className="" />
      </button>
      {sep}
      <button disabled aria-label="Mark met" className="ml-1 w-[25px]">
        <CheckMark color="#8f979f" />
      </button>
      <button disabled aria-label="Mark not met" className="w-[26px]">
        <CrossMark color="#80868c" />
      </button>
      <button disabled aria-label="Not applicable" className="mr-1 flex">
        <NaMark dim />
      </button>
      {sep}
      <button disabled className="ml-[2px] flex w-[98px] items-center justify-between pr-1">
        Repeat Criterion <Caret className="" />
      </button>
      {sep}
      <button className="ml-[2px] flex items-center gap-2 text-[#15428b]">
        View <Caret className="" />
      </button>
    </div>
  );
}

function Workspace() {
  return (
    <main className="ml-[3px] flex min-w-0 flex-1 flex-col border-t border-r border-b border-[#5f6370] bg-[#e9f1fb]">
      <div className="flex h-[26px] shrink-0 items-end justify-between border-b border-[#8aa3d0] bg-[linear-gradient(#e3efff,#b3d2ff)]">
        <button className="relative h-5 w-[78px] text-left text-[11px] leading-5 text-[#15428b]">
          <svg width="78" height="20" viewBox="0 0 78 20" className="absolute inset-0" aria-hidden="true">
            <path d="M0 20V3q0-2.500 3-2.500h54c5 0 7 4 9 7l5 8q3 4.500 7 4.500z" fill="#fafcff" stroke="#8aa3d0" />
          </svg>
          <span className="relative pl-[2px]">Worksheets</span>
        </button>
        <div className="flex h-full items-center gap-2 pt-1 pr-[6px] text-[#3b7ad0]">
          <button aria-label="Previous">
            <svg width="6" height="10" viewBox="0 0 6 10">
              <path d="M5.500 1v8L1 5z" fill="none" stroke="currentColor" />
            </svg>
          </button>
          <button aria-label="Next">
            <svg width="6" height="10" viewBox="0 0 6 10">
              <path d="M.5 1v8L5 5z" fill="none" stroke="currentColor" />
            </svg>
          </button>
          <button aria-label="Close tab">
            <svg width="9" height="8" viewBox="0 0 9 8">
              <path d="M1 .5l7 7M8 .5l-7 7" stroke="currentColor" strokeWidth="2" />
            </svg>
          </button>
        </div>
      </div>
      <div className="flex min-h-0 flex-1 flex-col border-r-[3px] border-b-[3px] border-l border-[#c3dafb] pt-[2px]">
        <Grid />
        <CriteriaBar />
        <Criteria />
      </div>
    </main>
  );
}

function StatusBar() {
  const bar = <span className="h-[13px] w-px bg-[#b4b4b4]" />;
  return (
    <footer className="flex h-6 shrink-0 items-center border-b border-[#5f6370] bg-[linear-gradient(90deg,#f0f0f0,#fbfbfb)] pl-1 font-['Open_Sans','Noto_Sans',sans-serif] text-[11px] text-black">
      <span className="w-[326px]">121 worksheet(s) - 63 criterion</span>
      {bar}
      <span className="flex-1" />
      {bar}
      <span className="w-[118px] pl-[5px] whitespace-nowrap">Local\Administrator</span>
      {bar}
      <svg width="16" height="16" viewBox="0 0 16 16" className="ml-[2px]" aria-hidden="true">
        <path d="M1 2l6-2 7 1v11l-7 4-6-2z" fill="#b9c9de" stroke="#7d92b0" strokeWidth=".7" />
        <path d="M7 4l7-3v11l-7 4z" fill="#8fa5c4" />
        <path d="M2 5l4 .5M2 8l4 .5M2 11l4 .5" stroke="#55708f" />
        <circle cx="11" cy="11" r="4.700" fill="#55b04a" stroke="#2d7d25" strokeWidth=".6" />
        <path d="M8.500 11l2 2 3-4" fill="none" stroke="#fff" strokeWidth="1.500" />
      </svg>
      <span className="w-[45px] pl-1">Online</span>
      {bar}
      <span className="w-10" />
      {bar}
      <svg width="12" height="12" viewBox="0 0 12 12" className="mt-2 mr-[3px] ml-[37px]" aria-hidden="true">
        <path d="M9 1h2M5 5h2M9 5h2M1 9h2M5 9h2M9 9h2" stroke="#a5a5a5" strokeWidth="2" />
      </svg>
    </footer>
  );
}

export default function App() {
  return (
    <div className="flex h-screen flex-col overflow-hidden bg-[#bfdbff] font-['Liberation_Sans',Arial,sans-serif] text-[11px]">
      <header className="relative flex h-[26px] shrink-0 items-center border-b border-[#a9c6ee] bg-[linear-gradient(#dfeaf9_0px,#e0ebf9_8px,#cdddf3_9px,#e6f1fd_25px)]">
        <button aria-label="Application menu" className="absolute top-[1px] left-[4px] z-10">
          <AppOrb />
        </button>
        <span className="ml-[35px] flex-1 text-center text-[12px] text-[#3e6aaa]">PDA Professional</span>
        <div className="flex w-[99px] items-center gap-7 text-[#5f6f86]">
          <button aria-label="Minimize">
            <svg width="9" height="9" viewBox="0 0 9 9">
              <path d="M1 7.500h7" stroke="currentColor" strokeWidth="2" />
            </svg>
          </button>
          <button aria-label="Maximize">
            <svg width="9" height="9" viewBox="0 0 9 9">
              <path d="M.5 1.500h8v6h-8z" fill="none" stroke="currentColor" />
              <path d="M0 2h9" stroke="currentColor" strokeWidth="2" />
            </svg>
          </button>
          <button aria-label="Close">
            <svg width="9" height="9" viewBox="0 0 9 9">
              <path d="M1 1l7 7M8 1L1 8" stroke="currentColor" strokeWidth="1.800" />
            </svg>
          </button>
        </div>
      </header>
      <nav className="flex h-[25px] shrink-0 items-end border-b border-[#8db2e3] pl-[49px] text-[12px] text-[#15428b]">
        <button className="-mb-px h-[22px] w-[70px] rounded-t-[3px] border border-b-0 border-[#8db2e3] bg-[linear-gradient(#ffffff,#dfeaf7)]">Application</button>
        <button className="h-[22px] w-[50px] pt-[2px]">Tools</button>
      </nav>
      <Ribbon />
      <div className="flex min-h-0 flex-1">
        <Sidebar />
        <Workspace />
        <aside className="w-[21px] shrink-0 border-r-2 border-[#5f6370] bg-[linear-gradient(#dbe8fb_0px,#c3d7f7_400px,#bcd6f6_600px,#8fb3ea_1200px)] pt-[2px] pl-px">
          <button className="flex h-[116px] w-[18px] items-center justify-start border border-[#1b2a8a] bg-[linear-gradient(#ff8f4a,#ffd08a)] pt-[2px] text-[11px] leading-4 whitespace-nowrap text-black [writing-mode:vertical-rl]">
            Worksheets: Tool Tip
          </button>
        </aside>
      </div>
      <StatusBar />
      <div className="flex h-1 shrink-0 items-end overflow-hidden bg-white pl-[14px] text-[12px] leading-3 text-black">
        <span className="h-1 w-[271px] border-x border-[#b0b0b0]" />
        <svg width="26" height="4" viewBox="0 0 26 4" className="ml-[18px]" aria-hidden="true">
          <path d="M0 4l4-4" stroke="#999" strokeWidth="1.500" />
          <path d="M15 0h13v4H15z" fill="#333" />
          <path d="M18 0h6v4h-6z" fill="#4a78d8" />
        </svg>
        <span className="ml-2 self-end">Videos</span>
      </div>
    </div>
  );
}
